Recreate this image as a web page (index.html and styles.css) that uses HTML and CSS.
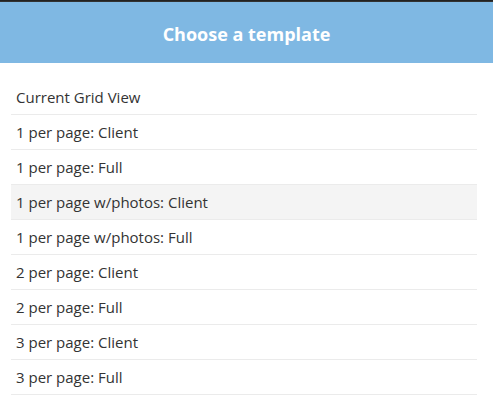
FILE: index.html
```html
<!DOCTYPE html>
<html>
<head>
<meta charset="utf-8">
<link rel="stylesheet" href="styles.css">
</head>
<body>
<div class="topbar"></div>
<header class="header"><h1 class="title">Choose a template</h1></header>
<ul class="list">
  <li class="item">Current Grid View</li>
  <li class="item">1 per page: Client</li>
  <li class="item">1 per page: Full</li>
  <li class="item item-active">1 per page w/photos: Client</li>
  <li class="item">1 per page w/photos: Full</li>
  <li class="item">2 per page: Client</li>
  <li class="item">2 per page: Full</li>
  <li class="item">3 per page: Client</li>
  <li class="item">3 per page: Full</li>
</ul>
</body>
</html>
```
FILE: styles.css
```css
html, body {
  margin: 0;
  padding: 0;
  background: #ffffff;
  font-family: "Open Sans", "Noto Sans", "Liberation Sans", sans-serif;
}
.topbar {
  height: 2px;
  background: linear-gradient(#1a1a1a, #3a3a3a);
}
.header {
  height: 61px;
  background: #7fb8e3;
  display: flex;
  align-items: center;
  justify-content: center;
  padding-top: 2px;
  box-sizing: border-box;
}
.title {
  margin: 0;
  color: #ffffff;
  font-size: 18px;
  font-weight: 700;
}
.list {
  list-style: none;
  margin: 17px 16px 0 11px;
  padding: 0;
}
.item {
  height: 34px;
  line-height: 34px;
  padding-left: 5px;
  font-size: 15px;
  color: #333333;
  border-bottom: 1px solid #ebebeb;
}
.item-active {
  background: #f4f4f4;
}
```
